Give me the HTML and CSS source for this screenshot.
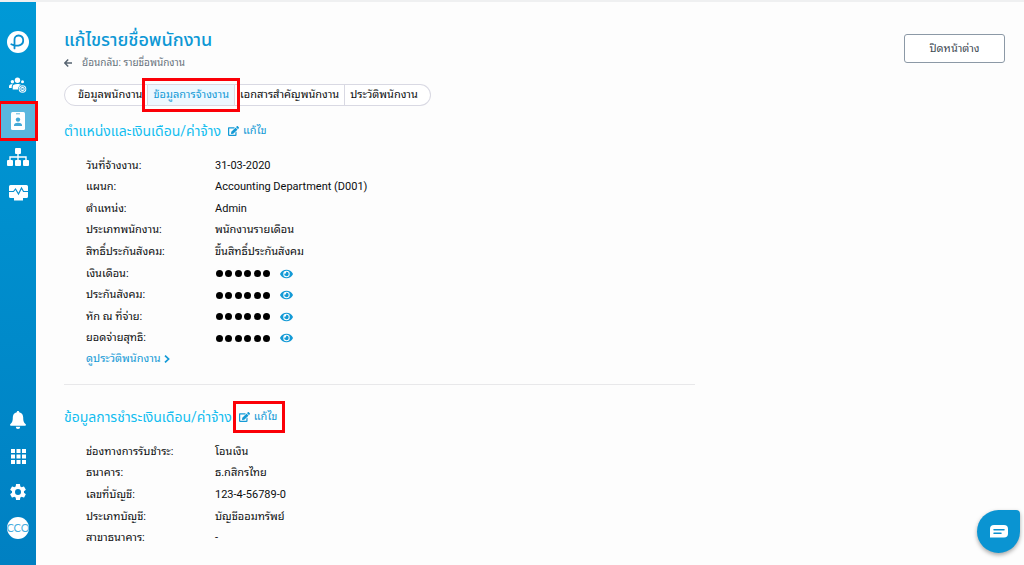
FILE: index.html
```html
<!DOCTYPE html>
<html lang="th">
<head>
<meta charset="utf-8">
<title>แก้ไขรายชื่อพนักงาน</title>
<link rel="stylesheet" href="styles.css">
</head>
<body>
<svg class="defs" aria-hidden="true">
  <symbol id="eye" viewBox="0 0 576 512"><path d="M572.5 241.4C518.300 135.600 410.900 64 288 64S57.700 135.600 3.500 241.400a32.350 32.350 0 0 0 0 29.200C57.700 376.400 165.100 448 288 448s230.300-71.600 284.500-177.400a32.350 32.350 0 0 0 0-29.200zM288 400a144 144 0 1 1 144-144 143.900 143.900 0 0 1-144 144zm0-240a95.300 95.300 0 0 0-25.300 3.800 47.850 47.850 0 0 1-66.900 66.900A95.800 95.800 0 1 0 288 160z"/></symbol>
  <symbol id="edit" viewBox="0 0 576 512"><path d="M402.600 83.200l90.200 90.200c3.800 3.800 3.800 10 0 13.800L274.400 405.600l-92.800 10.300c-12.400 1.400-22.900-9.100-21.500-21.500l10.300-92.800L388.800 83.200c3.800-3.800 10-3.800 13.800 0zm162-22.900l-48.800-48.800c-15.200-15.200-39.900-15.200-55.200 0l-35.400 35.400c-3.800 3.800-3.800 10 0 13.800l90.200 90.200c3.800 3.800 10 3.800 13.800 0l35.400-35.400c15.200-15.300 15.200-40 0-55.200zM384 346.200V448H64V128h229.800c3.200 0 6.200-1.300 8.500-3.500l40-40c7.600-7.600 2.200-20.500-8.500-20.500H48C21.500 64 0 85.500 0 112v352c0 26.500 21.500 48 48 48h352c26.500 0 48-21.500 48-48V306.200c0-10.700-12.900-16-20.500-8.500l-40 40c-2.200 2.300-3.500 5.300-3.500 8.500z"/></symbol>
</svg>

<div class="app">
  <nav class="sidebar" aria-label="เมนูหลัก">
    <div class="side-group">
      <a class="side-item logo" href="#" aria-label="หน้าแรก">
        <svg width="22" height="22" viewBox="0 0 22 22"><circle cx="11" cy="11" r="11" fill="#fff"/><path d="M4.300 13.300C7 14.700 10.600 15 13 14.100c4.600-1.700 4.300-9.300-1.300-9.600-3-.1-4.200 1.900-4.200 4.300v8.600" fill="none" stroke="#0a8fcf" stroke-width="1.800" stroke-linecap="round"/></svg>
      </a>
      <a class="side-item" href="#" aria-label="กลุ่มพนักงาน">
        <svg width="18" height="17" viewBox="0 0 18 17" fill="#fff"><circle cx="8.500" cy="3.200" r="2.700"/><circle cx="3.400" cy="4.800" r="1.700"/><circle cx="13.500" cy="4.800" r="1.500"/><path d="M0 11V9.400C0 7.900 1 7.300 3.800 7.300 2.800 8.200 2.700 9.500 2.700 11zM3.700 12.400V10C3.700 7.800 5.200 7 8.500 7c1.600 0 2.800.3 3.500.7-2 .9-3 2.600-2.900 4.700z"/><circle cx="13.500" cy="12" r="3.800"/><circle cx="13.500" cy="12" r="2.600" fill="none" stroke="#0a8fcf" stroke-width=".7"/><path d="M12.300 10.800l2.400 2.400m0-2.400l-2.400 2.400" stroke="#0a8fcf" stroke-width=".8"/></svg>
      </a>
      <a class="side-item active marked" href="#" aria-label="พนักงาน" aria-current="page">
        <svg width="14" height="18" viewBox="0 0 14 18"><rect width="14" height="18" rx="1.500" fill="#fff"/><path d="M5 1.800h4" stroke="#5ab7de" stroke-width="1"/><circle cx="7" cy="7.600" r="2.200" fill="#42a9d7"/><path d="M3 14v-.8c0-3.200 8-3.200 8 0v.8z" fill="#42a9d7"/></svg>
      </a>
      <a class="side-item" href="#" aria-label="โครงสร้างองค์กร">
        <svg width="22" height="18" viewBox="0 0 22 18" fill="#fff"><rect x="8" width="6" height="6" rx="1"/><rect y="12" width="6" height="6" rx="1"/><rect x="8" y="12" width="6" height="6" rx="1"/><rect x="16" y="12" width="6" height="6" rx="1"/><path d="M11 5v7M3 12V9h16v3" fill="none" stroke="#fff" stroke-width="1.400"/></svg>
      </a>
      <a class="side-item" href="#" aria-label="รายงาน">
        <svg width="19" height="16" viewBox="0 0 19 16"><path d="M1.500 0h16Q19 0 19 1.500v10q0 1.500-1.500 1.500H14v2.500H5V13H1.500Q0 13 0 11.500v-10Q0 0 1.500 0z" fill="#fff"/><path d="M0 6.500h4.500l2-2.500 3 5 3-6 2 3.500H19" fill="none" stroke="#0a8fcf" stroke-width="1.200"/></svg>
      </a>
    </div>
    <div class="side-group">
      <a class="side-item" href="#" aria-label="การแจ้งเตือน">
        <svg width="16" height="18" viewBox="0 0 16 18" fill="#fff"><path d="M8 0c.8 0 1.200.5 1.200 1.300 2.700.6 4 2.600 4 5.300 0 4 .9 5.300 2.300 6.500.9.800.4 1.700-.5 1.700H1c-.9 0-1.400-.9-.5-1.700 1.400-1.200 2.300-2.500 2.300-6.500 0-2.700 1.300-4.700 4-5.300C6.800.5 7.200 0 8 0zM5.800 15.700h4.400a2.200 2.200 0 0 1-4.400 0z"/></svg>
      </a>
      <a class="side-item" href="#" aria-label="แอปทั้งหมด">
        <svg width="15" height="15" viewBox="0 0 15 15" fill="#fff"><path d="M0 0h4v4H0zM5.500 0h4v4h-4zM11 0h4v4h-4zM0 5.500h4v4H0zM5.500 5.500h4v4h-4zM11 5.500h4v4h-4zM0 11h4v4H0zM5.500 11h4v4h-4zM11 11h4v4h-4z"/></svg>
      </a>
      <a class="side-item" href="#" aria-label="ตั้งค่า">
        <svg width="20" height="20" viewBox="0 0 24 24" fill="#fff"><path d="M19.140 12.940c.04-.3.060-.61.060-.94s-.02-.64-.07-.94l2.030-1.580c.18-.14.230-.41.120-.61l-1.920-3.320c-.12-.22-.37-.29-.59-.22l-2.390.96c-.5-.38-1.030-.7-1.620-.94L14.400 2.810c-.04-.24-.24-.41-.48-.41h-3.840c-.24 0-.43.170-.47.410L9.250 5.350c-.59.240-1.130.570-1.620.94l-2.390-.96c-.22-.08-.47 0-.59.220L2.740 8.870c-.12.210-.08.470.12.610l2.030 1.580c-.05.300-.09.630-.09.940s.02.640.07.940l-2.030 1.580c-.18.140-.23.410-.12.610l1.920 3.320c.12.220.37.290.59.220l2.390-.96c.5.380 1.030.7 1.620.94l.36 2.540c.05.240.24.410.48.410h3.840c.24 0 .44-.17.470-.41l.36-2.540c.59-.24 1.130-.56 1.620-.94l2.390.96c.22.080.47 0 .59-.22l1.920-3.320c.12-.22.070-.47-.12-.61l-2.010-1.580zM12 15.600A3.600 3.600 0 1 1 12 8.400a3.600 3.600 0 0 1 0 7.200z"/></svg>
      </a>
      <a class="side-item" href="#"><span class="avatar">CCO</span></a>
    </div>
  </nav>

  <main class="content">
    <header class="page-head">
      <div>
        <h1>แก้ไขรายชื่อพนักงาน</h1>
        <a class="back" href="#"><svg width="8" height="8" viewBox="0 0 8 8" fill="none" stroke="#566370" stroke-width="1.400"><path d="M8 4H1M4.200.5L.8 4l3.400 3.500"/></svg>ย้อนกลับ: รายชื่อพนักงาน</a>
      </div>
      <button class="close" type="button">ปิดหน้าต่าง</button>
    </header>

    <div class="tabs">
      <button type="button" class="tab first">ข้อมูลพนักงาน</button>
      <button type="button" class="tab selected marked">ข้อมูลการจ้างงาน</button>
      <button type="button" class="tab">เอกสารสำคัญพนักงาน</button>
      <button type="button" class="tab last">ประวัติพนักงาน</button>
    </div>

    <section class="job">
      <div class="section-head">
        <h2>ตำแหน่งและเงินเดือน/ค่าจ้าง</h2>
        <a class="edit" href="#"><svg class="glyph" width="11" height="10"><use href="#edit"/></svg>แก้ไข</a>
      </div>
      <dl class="rows rows-long">
        <div><dt>วันที่จ้างงาน:</dt><dd>31-03-2020</dd></div>
        <div><dt>แผนก:</dt><dd>Accounting Department (D001)</dd></div>
        <div><dt>ตำแหน่ง:</dt><dd>Admin</dd></div>
        <div><dt>ประเภทพนักงาน:</dt><dd>พนักงานรายเดือน</dd></div>
        <div><dt>สิทธิ์ประกันสังคม:</dt><dd>ขึ้นสิทธิ์ประกันสังคม</dd></div>
        <div><dt>เงินเดือน:</dt><dd><span class="dots"><i></i><i></i><i></i><i></i><i></i><i></i></span><button class="show" type="button" aria-label="แสดงเงินเดือน"><svg class="glyph" width="13" height="12"><use href="#eye"/></svg></button></dd></div>
        <div><dt>ประกันสังคม:</dt><dd><span class="dots"><i></i><i></i><i></i><i></i><i></i><i></i></span><button class="show" type="button" aria-label="แสดงประกันสังคม"><svg class="glyph" width="13" height="12"><use href="#eye"/></svg></button></dd></div>
        <div><dt>หัก ณ ที่จ่าย:</dt><dd><span class="dots"><i></i><i></i><i></i><i></i><i></i><i></i></span><button class="show" type="button" aria-label="แสดงหัก ณ ที่จ่าย"><svg class="glyph" width="13" height="12"><use href="#eye"/></svg></button></dd></div>
        <div><dt>ยอดจ่ายสุทธิ:</dt><dd><span class="dots"><i></i><i></i><i></i><i></i><i></i><i></i></span><button class="show" type="button" aria-label="แสดงยอดจ่ายสุทธิ"><svg class="glyph" width="13" height="12"><use href="#eye"/></svg></button></dd></div>
      </dl>
      <a class="history" href="#">ดูประวัติพนักงาน<svg width="6" height="8" viewBox="0 0 6 8" fill="none" stroke="#139ad6" stroke-width="1.700"><path d="M1 .6L4.600 4 1 7.400"/></svg></a>
    </section>

    <section class="payment">
      <div class="section-head">
        <h2>ข้อมูลการชำระเงินเดือน/ค่าจ้าง</h2>
        <a class="edit marked" href="#"><svg class="glyph" width="11" height="10"><use href="#edit"/></svg>แก้ไข</a>
      </div>
      <dl class="rows rows-short">
        <div><dt>ช่องทางการรับชำระ:</dt><dd>โอนเงิน</dd></div>
        <div><dt>ธนาคาร:</dt><dd>ธ.กสิกรไทย</dd></div>
        <div><dt>เลขที่บัญชี:</dt><dd>123-4-56789-0</dd></div>
        <div><dt>ประเภทบัญชี:</dt><dd>บัญชีออมทรัพย์</dd></div>
        <div><dt>สาขาธนาคาร:</dt><dd>-</dd></div>
      </dl>
    </section>
  </main>
</div>

<button class="chat" type="button" aria-label="แชท">
  <svg width="18" height="13" viewBox="0 0 18 13"><path d="M4 0h10q4 0 4 4v4.500q0 4-4 4H0V4q0-4 4-4z" fill="#fff"/><path d="M4 4.800h10M4 8.200h7" stroke="#0a8fcf" stroke-width="1.500" stroke-linecap="round"/></svg>
</button>
</body>
</html>
```
FILE: styles.css
```css
* { box-sizing: border-box; }
body {
  margin: 0;
  background: #fdfdfd;
  color: #0c0e10;
  font-family: Roboto, "Noto Sans Thai Looped", Sarabun, Loma, "Noto Sans", sans-serif;
  font-size: 11px;
  line-height: 20px;
}
a { color: #139ad6; text-decoration: none; }
button { font: inherit; color: inherit; cursor: pointer; }
.defs { display: none; }
svg { flex: none; }
.glyph { fill: currentColor; }
.app {
  display: flex;
  min-height: 100vh;
  border-top: 2px solid #eff0f1;
}
.sidebar {
  display: flex;
  flex-direction: column;
  justify-content: space-between;
  flex: 0 0 36px;
  padding: 22px 0 19px;
  background: linear-gradient(#0099d6, #0080c2);
}
.side-item {
  display: flex;
  align-items: center;
  justify-content: center;
  height: 36px;
}
.logo { margin-bottom: 7px; }
.active { background: #5ab7de; }
.avatar {
  display: flex;
  align-items: center;
  justify-content: center;
  width: 22px;
  height: 22px;
  overflow: hidden;
  border-radius: 50%;
  background: #fff;
  color: #48ade0;
  font-family: Lato, sans-serif;
  font-size: 11px;
}
.marked { position: relative; }
.marked::after {
  content: "";
  position: absolute;
  inset: -2px;
  border: 3px solid #fb0007;
  pointer-events: none;
}
.content { flex: 1; padding: 22px 19px 16px 28px; }
.page-head { display: flex; justify-content: space-between; align-items: flex-start; }
h1, h2 {
  margin: 0;
  font-family: Roboto, "Noto Sans Thai", "Noto Sans", sans-serif;
  font-weight: 400;
}
h1 { color: #0d98d5; font-size: 18px; font-weight: 500; line-height: 32px; }
.back {
  display: flex;
  align-items: center;
  gap: 10px;
  color: #66717c;
  font-size: 10px;
  line-height: 14px;
}
.close {
  width: 101px;
  height: 29px;
  margin-top: 10px;
  border: 1px solid #8c99a6;
  border-radius: 3px;
  background: #fff;
  color: #414b55;
}
.tabs { display: flex; margin-top: 14px; }
.tab {
  height: 22px;
  padding: 0 5px;
  border: 1px solid #d9d9e3;
  border-left-width: 0;
  background: #fff;
  line-height: 20px;
  white-space: nowrap;
}
.first { padding-left: 13px; border-left-width: 1px; border-radius: 11px 0 0 11px; }
.last { padding-right: 12px; border-radius: 0 11px 11px 0; }
.selected { background: #edf8ff; color: #139ad6; }
.selected::after { inset: -7px -6px; }
.section-head { display: flex; align-items: center; gap: 7px; line-height: 22px; }
h2 { color: #13bdf0; font-size: 14px; line-height: 22px; }
.edit { display: flex; align-items: center; gap: 4px; }
.edit.marked::after { inset: -5px -8px -5px -6px; }
.job { padding: 14px 0 15px; width: 67.100%; border-bottom: 1px solid #e8e8ea; }
.rows { display: grid; grid-auto-rows: 1fr; margin: 13px 0 0 22px; }
.rows > div { display: grid; grid-template-columns: 129px 1fr; align-items: center; }
.rows-long { min-height: 194px; }
.rows-short { min-height: 108px; }
dd { display: flex; align-items: center; gap: 9px; margin: 0; }
.dots { display: flex; gap: 2px; padding-left: 1px; }
.dots i { width: 7px; height: 7px; border-radius: 50%; background: #000; }
.dots i:nth-child(2n) { margin-right: 1px; }
.show { display: flex; padding: 0; border: 0; background: none; color: #139ad6; }
.history { display: flex; align-items: center; gap: 3px; margin-left: 22px; }
.payment { padding-top: 21px; }
.chat {
  position: fixed;
  right: 4px;
  bottom: 12px;
  display: flex;
  align-items: center;
  justify-content: center;
  width: 43px;
  height: 43px;
  padding: 0;
  border: 0;
  border-radius: 50% 4px 50% 50%;
  background: #0a94d2;
  box-shadow: 0 2px 4px rgba(0, 0, 0, .35);
}
```
